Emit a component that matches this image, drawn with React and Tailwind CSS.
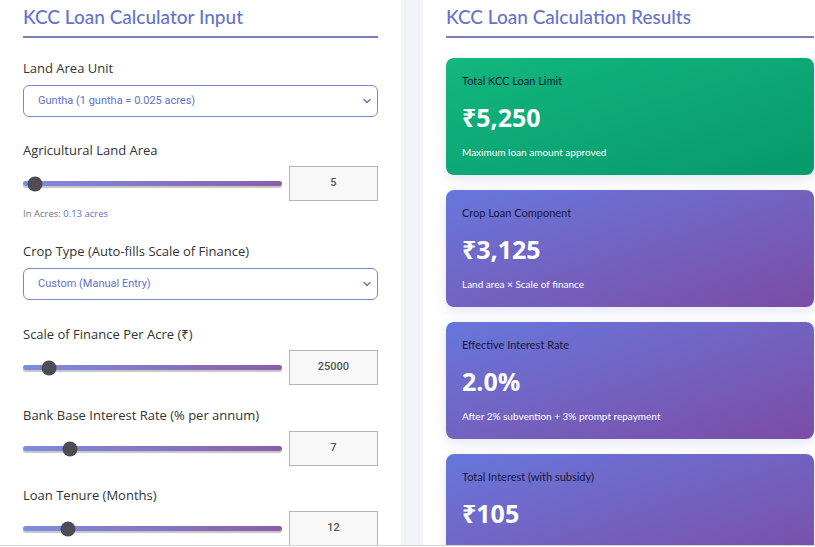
import { ChevronDown } from "lucide-react";

const heading = { fontFamily: '"Lato", "Noto Sans", sans-serif' };
const body = { fontFamily: '"Open Sans", "Noto Sans", sans-serif' };
const roboto = { fontFamily: 'Roboto, "Noto Sans", sans-serif' };

const Title = ({ children }) => (
  <div className="border-b-2 border-[#7b82b8] pb-[7px] pt-[5px]">
    <h2 className="text-[19px] leading-[24px] font-medium text-[#6674c9]" style={heading}>
      {children}
    </h2>
  </div>
);

const Select = ({ label, value, className }) => (
  <div className={className}>
    <div className="text-[13px] leading-[18px] text-[#333]" style={body}>{label}</div>
    <div className="mt-[8px] h-[32px] rounded-[6px] border border-[#7a86cf] flex items-center justify-between pl-[14px] pr-[4px]">
      <span className="text-[11px] text-[#6371c9]" style={roboto}>{value}</span>
      <ChevronDown size={12} strokeWidth={3} className="text-[#6a77c4]" />
    </div>
  </div>
);

const Slider = ({ label, value, pos, note, className }) => (
  <div className={className}>
    <div className="text-[13px] leading-[18px] text-[#333]" style={body}>{label}</div>
    <div className="mt-[7px] flex items-center gap-[7px]">
      <div className="relative w-[259px] h-[5px] rounded-full bg-gradient-to-r from-[#7c8ce0] to-[#8a5ea9] shadow-[0_2px_1px_#c6c6c6]">
        <div
          className="absolute top-1/2 w-[15px] h-[15px] -translate-x-1/2 -translate-y-1/2 rounded-full bg-[#4d4d55]"
          style={{ left: pos }}
        />
      </div>
      <div className="ml-auto w-[89px] h-[35px] border border-[#b4b4b4] bg-[#f8f8f8] flex items-center justify-center text-[11px] font-medium text-[#555]" style={roboto}>
        {value}
      </div>
    </div>
    {note && (
      <div className="mt-[6px] text-[9.5px] leading-[14px] text-[#777]" style={body}>
        In Acres: <span className="text-[#6371c9]">{note}</span>
      </div>
    )}
  </div>
);

const Card = ({ label, amount, sub, green }) => (
  <div
    className={`min-h-[117px] rounded-[8px] px-4 pt-[15px] pb-[15px] shadow-[0_4px_12px_rgba(102,116,201,0.18)] ${
      green
        ? "bg-gradient-to-br from-[#12b77f] to-[#07996b]"
        : "bg-gradient-to-br from-[#6677dc] to-[#7a4ca6]"
    }`}
  >
    <div className="text-[11px] leading-[15px] text-[#15183a]" style={heading}>{label}</div>
    <div className="mt-[14px] text-[25px] leading-[31px] font-bold text-white" style={body}>{amount}</div>
    {sub && (
      <div className="mt-[12px] text-[10px] leading-[14px] text-white" style={heading}>{sub}</div>
    )}
  </div>
);

export default function App() {
  return (
    <div className="w-[815px] h-[547px] overflow-hidden bg-white flex flex-col">
      <div className="h-[545px] flex bg-[#f3f4f8] overflow-hidden">
        <div className="w-[401px] shrink-0 bg-white px-[23px]">
          <Title>KCC Loan Calculator Input</Title>
          <Select className="mt-[21px]" label="Land Area Unit" value="Guntha (1 guntha = 0.025 acres)" />
          <Slider className="mt-[24px]" label="Agricultural Land Area" value="5" pos={12} note="0.13 acres" />
          <Select className="mt-[21px]" label="Crop Type (Auto-fills Scale of Finance)" value="Custom (Manual Entry)" />
          <Slider className="mt-[25px]" label="Scale of Finance Per Acre (₹)" value="25000" pos={26} />
          <Slider className="mt-[21px]" label="Bank Base Interest Rate (% per annum)" value="7" pos={47} />
          <Slider className="mt-[20px]" label="Loan Tenure (Months)" value="12" pos={45} />
        </div>
        <div className="ml-[22px] w-[403px] shrink-0 bg-white pl-[23px] pr-[12px]">
          <Title>KCC Loan Calculation Results</Title>
          <div className="mt-[20px] flex flex-col gap-[15px]">
            <Card green label="Total KCC Loan Limit" amount="₹5,250" sub="Maximum loan amount approved" />
            <Card label="Crop Loan Component" amount="₹3,125" sub="Land area × Scale of finance" />
            <Card label="Effective Interest Rate" amount="2.0%" sub="After 2% subvention + 3% prompt repayment" />
            <Card label="Total Interest (with subsidy)" amount="₹105" />
          </div>
        </div>
      </div>
      <div className="h-px bg-[#d4d4d4]" />
      <div className="h-px bg-white" />
    </div>
  );
}
